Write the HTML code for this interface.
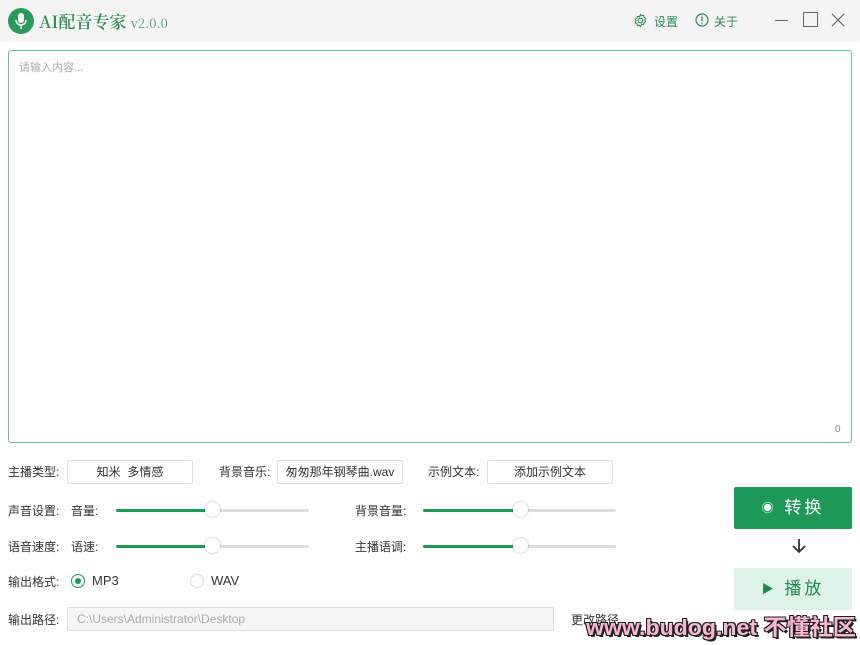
<!DOCTYPE html>
<html><head><meta charset="utf-8"><style>
*{margin:0;padding:0;box-sizing:border-box}
body{width:860px;height:645px;background:#fff;font-family:"Liberation Sans","Noto Sans CJK SC",sans-serif;font-size:12px;color:#333;position:relative;overflow:hidden}
.a{position:absolute}
.top{left:0;top:0;width:860px;height:42px;background:#f4f4f4}
.ta{left:8px;top:50px;width:844px;height:393px;border:1.5px solid #6cc096;border-radius:3px;background:#fff}
.lbl{font-size:12px;color:#333;white-space:nowrap}
.box{border:1px solid #ddd;border-radius:2px;background:#fff;text-align:center;line-height:22px;height:24px;font-size:12px;color:#333}
.tr{height:3px;background:#ddd;border-radius:2px}
.fill{height:3px;background:#1d9a57;border-radius:2px}
.kn{width:15px;height:15px;border-radius:50%;background:#fff;box-shadow:0 0 2px rgba(0,0,0,.35)}
</style></head><body>
<div class="a top"></div>
<div class="a" style="left:8px;top:8px;width:26px;height:26px;border-radius:50%;background:#2a9a5c"></div>
<svg class="a" style="left:8px;top:8px" width="26" height="26" viewBox="0 0 26 26"><rect x="10" y="5" width="6" height="10" rx="3" fill="#fff"/><path d="M8 12a5 5 0 0 0 10 0M13 17v4" stroke="#fff" stroke-width="1.5" fill="none"/></svg>
<div class="a" style="left:39px;top:8px;font-family:'Noto Serif CJK SC','Liberation Serif',serif;font-size:17px;color:#2a8a55;font-weight:600">AI配音专家 <span style="font-size:13px;font-weight:normal;color:#5a9a77">v2.0.0</span></div>
<svg class="a" style="left:633px;top:13px" width="15" height="15" viewBox="0 0 16 16"><circle cx="8" cy="8" r="2.5" fill="none" stroke="#2a8a55" stroke-width="1.2"/><path d="M8 1.5l1.3 1.5 2-.5.5 2 1.7 1-.8 1.9.8 2-1.7 1-.5 2-2-.5L8 14.5l-1.3-1.5-2 .5-.5-2-1.7-1 .8-2-.8-1.9 1.7-1 .5-2 2 .5z" fill="none" stroke="#2a8a55" stroke-width="1.1"/></svg>
<div class="a" style="left:654px;top:13px;color:#2a8a55;font-size:12px">设置</div>
<svg class="a" style="left:695px;top:13px" width="14" height="14" viewBox="0 0 14 14"><circle cx="7" cy="7" r="6" fill="none" stroke="#2a8a55" stroke-width="1.2"/><path d="M7 3.5v4.5M7 9.5v1.2" stroke="#2a8a55" stroke-width="1.3"/></svg>
<div class="a" style="left:714px;top:13px;color:#2a8a55;font-size:12px">关于</div>
<div class="a" style="left:775px;top:20px;width:13px;height:1px;background:#666"></div>
<div class="a" style="left:803px;top:12px;width:15px;height:15px;border:1.2px solid #666"></div>
<svg class="a" style="left:831px;top:13px" width="14" height="14"><path d="M1 1L13 13M13 1L1 13" stroke="#666" stroke-width="1.2"/></svg>
<div class="a ta"></div>
<div class="a" style="left:19px;top:59px;font-size:11px;color:#aaa">请输入内容...</div>
<div class="a" style="left:835px;top:424px;font-size:10px;color:#888">0</div>

<div class="a lbl" style="left:8px;top:463px">主播类型:</div>
<div class="a box" style="left:67px;top:460px;width:126px">知米&nbsp; 多情感</div>
<div class="a lbl" style="left:219px;top:463px">背景音乐:</div>
<div class="a box" style="left:277px;top:460px;width:126px">匆匆那年钢琴曲.wav</div>
<div class="a lbl" style="left:428px;top:463px">示例文本:</div>
<div class="a box" style="left:487px;top:460px;width:126px">添加示例文本</div>

<div class="a lbl" style="left:8px;top:502px">声音设置:</div>
<div class="a lbl" style="left:71px;top:502px">音量:</div>
<div class="a tr" style="left:116px;top:509px;width:193px"></div><div class="a fill" style="left:116px;top:509px;width:96px"></div><div class="a kn" style="left:205px;top:502px"></div>
<div class="a lbl" style="left:355px;top:502px">背景音量:</div>
<div class="a tr" style="left:423px;top:509px;width:193px"></div><div class="a fill" style="left:423px;top:509px;width:96px"></div><div class="a kn" style="left:513px;top:502px"></div>

<div class="a lbl" style="left:8px;top:538px">语音速度:</div>
<div class="a lbl" style="left:71px;top:538px">语速:</div>
<div class="a tr" style="left:116px;top:545px;width:193px"></div><div class="a fill" style="left:116px;top:545px;width:96px"></div><div class="a kn" style="left:205px;top:538px"></div>
<div class="a lbl" style="left:355px;top:538px">主播语调:</div>
<div class="a tr" style="left:423px;top:545px;width:193px"></div><div class="a fill" style="left:423px;top:545px;width:96px"></div><div class="a kn" style="left:513px;top:538px"></div>

<div class="a lbl" style="left:8px;top:573px">输出格式:</div>
<div class="a" style="left:71px;top:574px;width:14px;height:14px;border-radius:50%;border:1.5px solid #1d9a57"></div>
<div class="a" style="left:75px;top:578px;width:6px;height:6px;border-radius:50%;background:#1d9a57"></div>
<div class="a lbl" style="left:92px;top:573px;font-size:13px">MP3</div>
<div class="a" style="left:190px;top:574px;width:14px;height:14px;border-radius:50%;border:1px solid #ddd"></div>
<div class="a lbl" style="left:211px;top:573px;font-size:13px">WAV</div>

<div class="a lbl" style="left:8px;top:611px">输出路径:</div>
<div class="a" style="left:67px;top:607px;width:487px;height:24px;border:1px solid #ddd;border-radius:2px;background:#f6f6f6;color:#aaa;font-size:12px;line-height:22px;padding-left:9px">C:\Users\Administrator\Desktop</div>
<div class="a lbl" style="left:571px;top:611px">更改路径</div>

<div class="a" style="left:734px;top:487px;width:118px;height:42px;background:#1d9a57;border-radius:2px;color:#fff;font-size:17px;text-align:center;line-height:42px;letter-spacing:3px"><span style="font-size:12px;vertical-align:1px">◉</span> 转换</div>
<svg class="a" style="left:790px;top:537px" width="18" height="18"><path d="M9 2v13M3 9l6 6 6-6" stroke="#333" stroke-width="1.8" fill="none"/></svg>
<div class="a" style="left:734px;top:568px;width:118px;height:42px;background:#dff2e7;border-radius:2px;color:#1d8a50;font-size:17px;text-align:center;line-height:42px;letter-spacing:3px"><span style="font-size:12px;vertical-align:1px">▶</span> 播放</div>

<div class="a" style="left:586px;top:610px;font-family:'Liberation Sans','Noto Sans CJK SC',sans-serif;font-weight:bold;font-size:22px;color:#f7b7d2;letter-spacing:0px;text-shadow:-1px -1px 0 #222,1px -1px 0 #222,-1px 1px 0 #222,1px 1px 0 #222,2px 2px 0 #222;white-space:nowrap;transform:scaleX(1.05);transform-origin:left">www.budog.net 不懂社区</div>
</body></html>
